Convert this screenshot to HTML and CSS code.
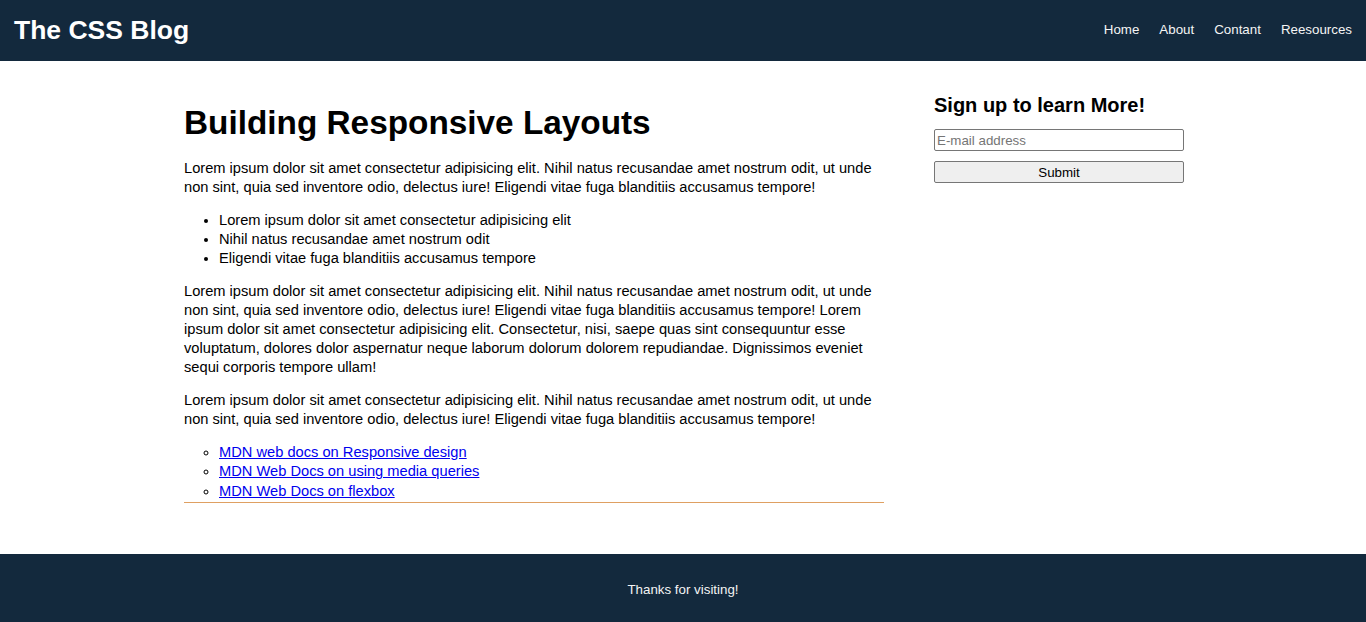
FILE: index.html
```html
<!DOCTYPE html>
<html lang="en">
<head>
<meta charset="utf-8">
<title>The CSS Blog</title>
<link rel="stylesheet" href="styles.css">
</head>
<body>
<header class="site-header">
  <div class="logo">The CSS Blog</div>
  <nav class="nav">
    <a href="#">Home</a>
    <a href="#">About</a>
    <a href="#">Contant</a>
    <a href="#">Reesources</a>
  </nav>
</header>
<div class="container">
  <main class="article">
    <h1>Building Responsive Layouts</h1>
    <p>Lorem ipsum dolor sit amet consectetur adipisicing elit. Nihil natus recusandae amet nostrum odit, ut unde non sint, quia sed inventore odio, delectus iure! Eligendi vitae fuga blanditiis accusamus tempore!</p>
    <ul class="points">
      <li>Lorem ipsum dolor sit amet consectetur adipisicing elit</li>
      <li>Nihil natus recusandae amet nostrum odit</li>
      <li>Eligendi vitae fuga blanditiis accusamus tempore</li>
    </ul>
    <p>Lorem ipsum dolor sit amet consectetur adipisicing elit. Nihil natus recusandae amet nostrum odit, ut unde non sint, quia sed inventore odio, delectus iure! Eligendi vitae fuga blanditiis accusamus tempore! Lorem ipsum dolor sit amet consectetur adipisicing elit. Consectetur, nisi, saepe quas sint consequuntur esse voluptatum, dolores dolor aspernatur neque laborum dolorum dolorem repudiandae. Dignissimos eveniet sequi corporis tempore ullam!</p>
    <p>Lorem ipsum dolor sit amet consectetur adipisicing elit. Nihil natus recusandae amet nostrum odit, ut unde non sint, quia sed inventore odio, delectus iure! Eligendi vitae fuga blanditiis accusamus tempore!</p>
    <ul class="links">
      <li><a href="#">MDN web docs on Responsive design</a></li>
      <li><a href="#">MDN Web Docs on using media queries</a></li>
      <li class="last"><a href="#">MDN Web Docs on flexbox</a></li>
    </ul>
  </main>
  <aside class="sidebar">
    <h2>Sign up to learn More!</h2>
    <form class="signup">
      <input class="field" type="email" placeholder="E-mail address">
      <button class="btn" type="button">Submit</button>
    </form>
  </aside>
</div>
<footer class="site-footer">Thanks for visiting!</footer>
</body>
</html>
```

FILE: styles.css
```css
* { box-sizing: border-box; }

body {
  margin: 0;
  font-family: "Liberation Sans", Arial, sans-serif;
  font-size: 14.667px;
  line-height: 19px;
  color: #000;
  background: #fff;
}

.site-header {
  height: 61px;
  background: #13293d;
  color: #fff;
  display: flex;
  align-items: center;
  justify-content: space-between;
  padding: 0 14px 1px 14px;
}

.logo {
  font-size: 26.5px;
  font-weight: bold;
  line-height: 1;
  padding-top: 1px;
}

.nav {
  display: flex;
  gap: 20px;
  margin-bottom: 2px;
}

.nav a {
  color: #f4f4f4;
  text-decoration: none;
  font-size: 13.33px;
}

.container {
  width: 1000px;
  margin-left: calc(50% - 499px);
  display: flex;
  gap: 50px;
  padding: 30px 0 51px;
}

.article {
  width: 700px;
  border-bottom: 1px solid #dfa062;
  padding-bottom: 1px;
}

.article h1 {
  font-size: 33.33px;
  line-height: 40px;
  margin: 12px 0 16px;
}

.article p {
  margin: 14px 0;
}

.article ul {
  margin: 14px 0;
  padding-left: 35px;
}

.points { list-style: disc; }

.article .links {
  list-style: circle;
  margin: 13px 0 0;
}

.links .last { margin-top: 1px; }

.links a { color: #0000ee; }

.sidebar {
  width: 250px;
}

.sidebar h2 {
  font-size: 20px;
  line-height: 24px;
  margin: 2px 0 12px;
}

.signup {
  display: flex;
  flex-direction: column;
  gap: 10px;
}

.field, .btn {
  width: 250px;
  height: 22px;
  border: 1px solid #767676;
  border-radius: 2px;
  font-family: "Liberation Sans", Arial, sans-serif;
  font-size: 13.33px;
  padding: 1px 2px;
  margin: 0;
}

.field { background: #fff; }
.field::placeholder { color: #757575; }

.btn {
  background: #efefef;
  color: #000;
}

.site-footer {
  background: #13293d;
  color: #f4f4f4;
  font-size: 13.33px;
  text-align: center;
  padding: 26px 0 26px;
}
```
